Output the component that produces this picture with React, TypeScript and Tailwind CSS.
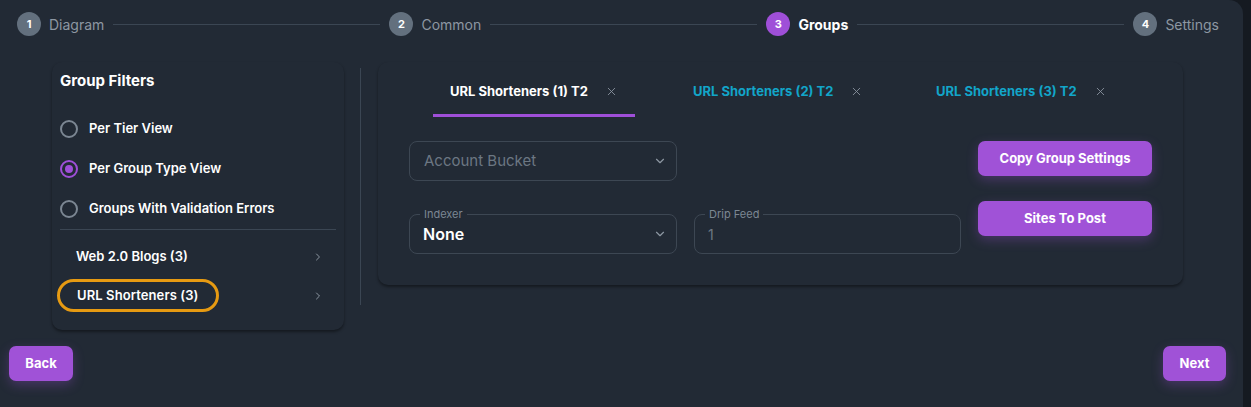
import React from 'react';
import { ChevronDown, ChevronRight, X } from 'lucide-react';

const steps = [
  { n: 1, label: 'Diagram' },
  { n: 2, label: 'Common' },
  { n: 3, label: 'Groups', active: true },
  { n: 4, label: 'Settings' },
];

const tabs = [
  { label: 'URL Shorteners (1) T2', active: true },
  { label: 'URL Shorteners (2) T2' },
  { label: 'URL Shorteners (3) T2' },
];

const filters = [
  { label: 'Per Tier View' },
  { label: 'Per Group Type View', checked: true },
  { label: 'Groups With Validation Errors' },
];

const App: React.FC = () => {
  return (
    <div className="w-[1251px] h-[407px] flex bg-[#151a21] overflow-hidden font-['Inter',sans-serif]">
      <div className="w-[1243px] h-full bg-[#222a35] rounded-tr-[14px] flex flex-col">

        {/* ─── Stepper ─── */}
        <div className="h-[48px] flex items-center pl-[17px] pr-[24px]">
          {steps.map((s, i) => (
            <React.Fragment key={s.n}>
              <div className="flex items-center gap-[8px] shrink-0">
                <span
                  className={`w-[24px] h-[24px] rounded-full flex items-center justify-center text-[11px] font-bold text-white ${
                    s.active ? 'bg-[#9f4fd8]' : 'bg-[#63707e]'
                  }`}
                >
                  {s.n}
                </span>
                <span
                  className={`text-[14px] ${s.active ? 'text-white font-bold' : 'text-[#8d97a2]'}`}
                >
                  {s.label}
                </span>
              </div>
              {i < steps.length - 1 && <div className="flex-1 h-px bg-[#3b4653] mx-[9px]" />}
            </React.Fragment>
          ))}
        </div>

        {/* ─── Body ─── */}
        <div className="flex items-start pl-[52px] mt-[14px]">
          {/* Left filters card */}
          <div className="w-[292px] h-[268px] rounded-[10px] bg-[#222a35] shadow-[0_2px_3px_rgba(0,0,0,0.4)] pl-[8px] pr-[8px] pt-[8px]">
            <div className="text-[15px] font-bold text-white leading-[22px]">Group Filters</div>
            <div className="flex flex-col gap-[20px] mt-[27px]">
              {filters.map((f) => (
                <div key={f.label} className="flex items-center gap-[11px] h-[20px]">
                  <span
                    className={`w-[18px] h-[18px] rounded-full border-2 flex items-center justify-center ${
                      f.checked ? 'border-[#9f4fd8]' : 'border-[#7c8793]'
                    }`}
                  >
                    {f.checked && <span className="w-[8px] h-[8px] rounded-full bg-[#9f4fd8]" />}
                  </span>
                  <span className="text-[13px] font-semibold text-white">{f.label}</span>
                </div>
              ))}
            </div>
            <div className="h-px bg-[#3b4653] mt-[10px]" />
            <div className="flex flex-col gap-[6px] mt-[10px] -ml-[3px]">
              <div className="flex items-center justify-between h-[33px] pr-[12px]">
                <span className="px-[16px] h-[33px] flex items-center border-[3px] border-transparent rounded-full text-[13px] font-semibold text-white">
                  Web 2.0 Blogs (3)
                </span>
                <ChevronRight size={12} className="text-[#8d97a2]" />
              </div>
              <div className="flex items-center justify-between h-[33px] pr-[12px]">
                <span className="px-[17px] h-[33px] flex items-center border-[3px] border-[#e69a12] rounded-full text-[13px] font-semibold text-white tracking-[0.1px]">
                  URL Shorteners (3)
                </span>
                <ChevronRight size={12} className="text-[#8d97a2]" />
              </div>
            </div>
          </div>

          {/* Divider */}
          <div className="w-px h-[237px] bg-[#3b4653] ml-[16px] mr-[17px] mt-[6px]" />

          {/* Right group card */}
          <div className="w-[805px] h-[223px] rounded-[10px] bg-[#222a35] shadow-[0_2px_3px_rgba(0,0,0,0.4)]">
            <div className="flex gap-[41px] pl-[55px] pt-[4px]">
              {tabs.map((t) => (
                <div
                  key={t.label}
                  className={`w-[202px] h-[51px] flex items-center pl-[17px] pt-[3px] gap-[17px] border-b-[3px] ${
                    t.active ? 'border-[#9f4fd8]' : 'border-transparent'
                  }`}
                >
                  <span className={`text-[13px] font-bold ${t.active ? 'text-white' : 'text-[#12a5c9]'}`}>
                    {t.label}
                  </span>
                  <X size={13} strokeWidth={1.6} className="text-[#8d97a2]" />
                </div>
              ))}
            </div>

            <div className="flex pl-[31px] mt-[24px]">
              <div className="flex flex-col gap-[33px]">
                <div className="w-[268px] h-[40px] border border-[#3d4753] rounded-[8px] flex items-center justify-between pl-[14px] pr-[9px]">
                  <span className="text-[15px] text-[#6c7783]">Account Bucket</span>
                  <ChevronDown size={14} className="text-[#8d97a2]" />
                </div>
                <div className="flex gap-[17px]">
                  <div className="relative w-[268px] h-[40px] border border-[#3d4753] rounded-[8px] flex items-center justify-between pl-[13px] pr-[9px]">
                    <span className="absolute -top-[8px] left-[10px] px-[4px] bg-[#222a35] text-[11px] leading-[14px] text-[#7c8793]">
                      Indexer
                    </span>
                    <span className="text-[16px] font-semibold text-white">None</span>
                    <ChevronDown size={14} className="text-[#8d97a2]" />
                  </div>
                  <div className="relative w-[267px] h-[40px] border border-[#3d4753] rounded-[8px] flex items-center pl-[13px]">
                    <span className="absolute -top-[8px] left-[10px] px-[4px] bg-[#222a35] text-[11px] leading-[14px] text-[#7c8793]">
                      Drip Feed
                    </span>
                    <span className="text-[14px] text-[#6c7783]">1</span>
                  </div>
                </div>
              </div>
              <div className="flex flex-col gap-[25px] ml-[17px]">
                <button className="w-[174px] h-[35px] rounded-[7px] bg-[#a052d7] text-white text-[13px] font-bold shadow-[0_4px_12px_rgba(160,82,215,0.3)]">
                  Copy Group Settings
                </button>
                <button className="w-[174px] h-[35px] rounded-[7px] bg-[#a052d7] text-white text-[13px] font-bold shadow-[0_4px_12px_rgba(160,82,215,0.3)]">
                  Sites To Post
                </button>
              </div>
            </div>
          </div>
        </div>

        {/* ─── Footer ─── */}
        <div className="flex justify-between pl-[9px] pr-[17px] mt-[16px]">
          <button className="w-[64px] h-[35px] rounded-[7px] bg-[#a052d7] text-white text-[13px] font-bold shadow-[0_4px_12px_rgba(160,82,215,0.3)]">
            Back
          </button>
          <button className="w-[63px] h-[35px] rounded-[7px] bg-[#a052d7] text-white text-[13px] font-bold shadow-[0_4px_12px_rgba(160,82,215,0.3)]">
            Next
          </button>
        </div>
      </div>
    </div>
  );
};

export default App;
